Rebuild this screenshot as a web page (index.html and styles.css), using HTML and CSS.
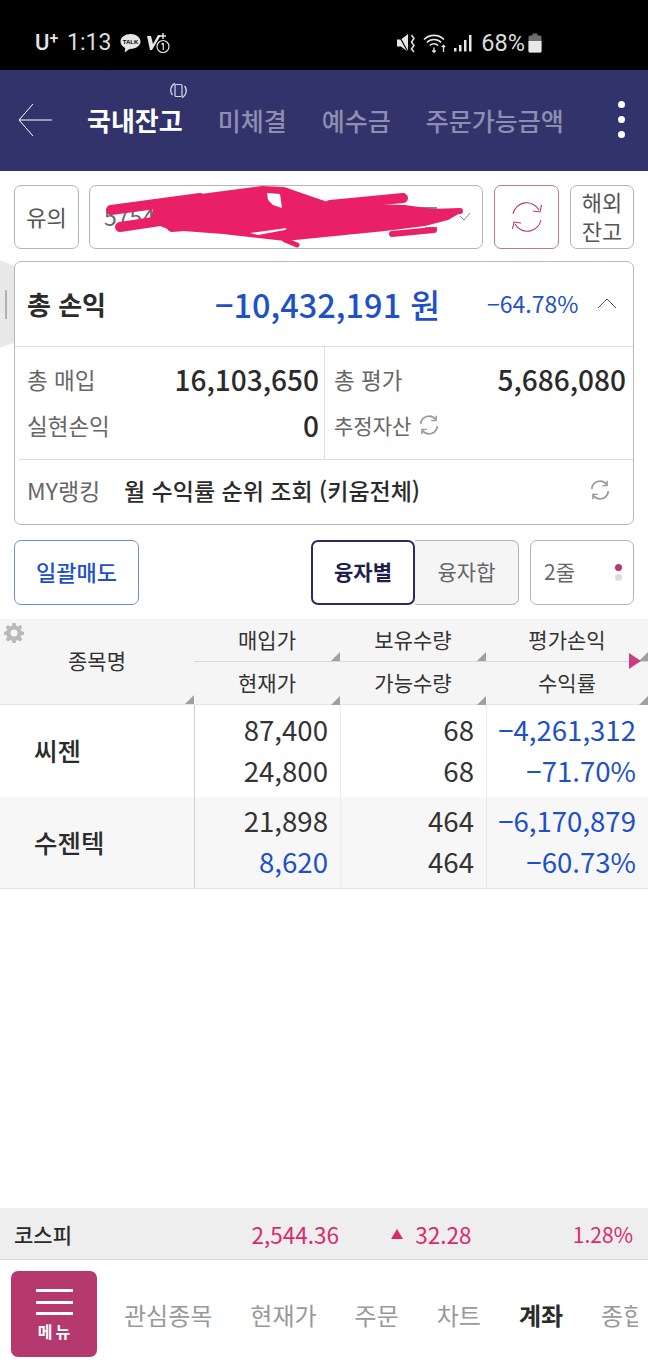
FILE: index.html
```html
<!DOCTYPE html>
<html lang="ko">
<head>
<meta charset="utf-8">
<title>국내잔고</title>
<link rel="stylesheet" href="styles.css">
</head>
<body>
<div class="page">
  <div class="status">
    <div class="status-left">
      <span class="carrier">U<sup>+</sup></span><span class="clock">1:13</span>
      <svg class="talk" width="21" height="20" viewBox="0 0 21 20"><path d="M10.500 1C5 1 .5 4.300.5 8.500c0 2.700 1.900 5.100 4.700 6.400L4.700 19.500l4.800-3.600h1c5.500 0 10-3.300 10-7.400S16 1 10.500 1z" fill="#e6e6e6"/><text x="10.500" y="11" class="talk-t">TALK</text></svg>
      <svg class="vo" width="24" height="21" viewBox="0 0 24 21"><path d="M1 3h4l2 8 5-9h3L6 17H4z" fill="#e6e6e6"/><path d="M17 0v6M14 3h6" stroke="#e6e6e6" stroke-width="1.500"/><circle cx="17" cy="13.500" r="6" fill="#000" stroke="#e6e6e6" stroke-width="1.200"/><path d="M17.300 10v7M15.600 11.500l1.700-1.500" stroke="#e6e6e6" stroke-width="1.200" fill="none"/></svg>
    </div>
    <div class="status-right">
      <svg class="s-mute" width="19" height="20" viewBox="0 0 19 20"><path d="M0 6.500h4l7-5.500v18l-7-5.500H0z" fill="#e6e6e6"/><path d="M14.500 2l2.500 3.500-2.500 3.500 2.500 3.500-2.500 3.500 2.500 3" stroke="#e6e6e6" stroke-width="1.500" fill="none"/><path d="M1 1l10 18" stroke="#000" stroke-width="1.200"/></svg>
      <svg class="s-wifi" width="24" height="20" viewBox="0 0 24 20"><path d="M1 6.500c5.500-5.500 14.500-5.500 20 0M3.800 9.500c4-4 10.400-4 14.400 0M6.800 12.500c2.300-2.300 6-2.300 8.400 0" stroke="#e6e6e6" stroke-width="1.600" fill="none"/><path d="M11 14.500v5M9.300 17.500l1.700 1.800 1.700-1.800M20.500 19v-6.500M18.800 14l1.700-1.700 1.700 1.700" stroke="#e6e6e6" stroke-width="1.300" fill="none"/></svg>
      <svg class="s-sig" width="18" height="18" viewBox="0 0 18 18"><rect x="0" y="14" width="2.500" height="3.500" fill="#e6e6e6"/><rect x="5" y="11" width="2.500" height="6.500" fill="#e6e6e6"/><rect x="10" y="6" width="2.500" height="11.500" fill="#e6e6e6"/><rect x="15" y="1" width="2.500" height="16.500" fill="#e6e6e6"/></svg>
      <span class="battery-text">68%</span>
      <svg class="s-bat" width="14" height="20" viewBox="0 0 14 20"><path d="M4.500 .5h5v2h2.500a1.500 1.500 0 0 1 1.500 1.500v14a1.500 1.500 0 0 1-1.500 1.500H2A1.500 1.500 0 0 1 .5 18V4A1.500 1.500 0 0 1 2 2.500h2.500z" fill="#6e6e6e"/><path d="M.5 8h13v10a1.500 1.500 0 0 1-1.500 1.500H2A1.500 1.500 0 0 1 .5 18z" fill="#e8e8e8"/></svg>
    </div>
  </div>

  <header class="appbar">
    <svg class="back" width="36" height="36" viewBox="0 0 36 36"><path d="M35 18H2M16 2L2 18l14 16" stroke="#fff" stroke-width="1" fill="none"/></svg>
    <nav class="tabs">
      <span class="tab tab-on">국내잔고
        <svg class="rotate" width="19" height="19" viewBox="0 0 19 19"><rect x="6" y="3.500" width="7" height="12" rx="1.200" stroke="#d8d8e8" stroke-width="1.200" fill="none"/><path d="M3.500 14A7.500 7.500 0 0 1 6 2.400M15.500 5A7.500 7.500 0 0 1 13 16.600" stroke="#d8d8e8" stroke-width="1.200" fill="none"/></svg>
      </span>
      <span class="tab">미체결</span>
      <span class="tab">예수금</span>
      <span class="tab">주문가능금액</span>
    </nav>
    <div class="kebab"><i></i><i></i><i></i></div>
  </header>

  <div class="account-row">
    <button class="btn-box notice">유의</button>
    <div class="account-select">
      <span class="acct-no">5754</span>
      <svg class="check" width="12" height="10" viewBox="0 0 12 10"><path d="M1 4l4 4 6-7" stroke="#888" stroke-width="1" fill="none"/></svg>
      <svg class="scribble" width="394" height="64" viewBox="89 185 394 64"><path d="M407 207h30v2h-30zM425 227h12v2h-12z" fill="#888"/><path d="M155 200L262 186l22 1 44 16 77 2 35 5 22 2-14 8-23 6-40 5-100 10-62-7-53-4-20-8z" fill="#ea2066"/><path d="M111 210L200 198M120 227L180 218M172 227L230 222" stroke="#ea2066" stroke-width="10" stroke-linecap="round" fill="none"/><path d="M285 190L332 206M285 240L297 245" stroke="#ea2066" stroke-width="5" stroke-linecap="round" fill="none"/><path d="M330 205L403 198" stroke="#ea2066" stroke-width="10" stroke-linecap="round" fill="none"/><path d="M392 234L434 230M430 212L460 211" stroke="#ea2066" stroke-width="6" stroke-linecap="round" fill="none"/><path d="M267 193l13 1 2 14-9-3-5-5zM250 233l37-5-2 2-27 5z" fill="#fff"/></svg>
    </div>
    <button class="btn-box refresh">
      <svg width="34" height="38" viewBox="0 0 34 38"><path d="M3 16A14 14 0 0 1 29 12M31 22A14 14 0 0 1 5 26" stroke="#b5386e" stroke-width="1.100" fill="none"/><path d="M23 13l7 1 1.500-7M11 25l-7-1-1.500 7" stroke="#b5386e" stroke-width="1.100" fill="none"/></svg>
    </button>
    <button class="btn-box overseas">해외<br>잔고</button>
  </div>

  <section class="card">
    <div class="handle"><i></i></div>
    <div class="total">
      <span class="total-label">총 손익</span>
      <span class="total-val">−10,432,191 원</span>
      <span class="total-pct">−64.78%</span>
      <svg class="caret" width="20" height="11" viewBox="0 0 20 11"><path d="M1 10l9-9 9 9" stroke="#555" stroke-width="1" fill="none"/></svg>
    </div>
    <div class="summary">
      <div class="cell cell-l">
        <div class="line"><span class="lbl">총 매입</span><span class="num">16,103,650</span></div>
        <div class="line"><span class="lbl">실현손익</span><span class="num">0</span></div>
      </div>
      <div class="cell cell-r">
        <div class="line"><span class="lbl">총 평가</span><span class="num">5,686,080</span></div>
        <div class="line"><span class="lbl lbl-icon">추정자산
          <svg width="22" height="22" viewBox="0 0 20 20"><path d="M2.500 9A7.500 7.500 0 0 1 16 5M17.500 11A7.500 7.500 0 0 1 4 15" stroke="#999" stroke-width="1.600" fill="none"/><path d="M16.500 1.500V6h-4.500M3.500 18.500V14H8" stroke="#999" stroke-width="1.300" fill="none"/></svg></span></div>
      </div>
    </div>
    <div class="ranking">
      <span class="rank-label">MY랭킹</span>
      <span class="rank-text">월 수익률 순위 조회 (키움전체)</span>
      <svg width="22" height="22" viewBox="0 0 20 20"><path d="M2.500 9A7.500 7.500 0 0 1 16 5M17.500 11A7.500 7.500 0 0 1 4 15" stroke="#999" stroke-width="1.600" fill="none"/><path d="M16.500 1.500V6h-4.500M3.500 18.500V14H8" stroke="#999" stroke-width="1.300" fill="none"/></svg>
    </div>
  </section>

  <div class="actions">
    <button class="sell">일괄매도</button>
    <div class="segment">
      <button class="seg seg-on">융자별</button>
      <button class="seg">융자합</button>
    </div>
    <div class="lines"><span>2줄</span><span class="dots"><i class="dot-on"></i><i></i></span></div>
  </div>

  <div class="table">
    <div class="thead">
      <div class="th th-name"><svg class="gear" width="20" height="20" viewBox="0 0 20 20"><path d="M8.500 0h3l.5 2.800 1.800.8L16.200 2l2.100 2.100-1.600 2.400.8 1.800 2.500.5v3l-2.500.5-.8 1.800 1.600 2.400-2.100 2.100-2.400-1.600-1.800.8-.5 2.200h-3L8 17.800l-1.800-.8-2.400 1.600-2.100-2.100 1.600-2.400-.8-1.800L0 11.700v-3l2.500-.5.8-1.800L1.700 4 3.800 2l2.400 1.600L8 2.800z" fill="#b9b9b9"/><circle cx="10" cy="10" r="3.500" fill="#f5f5f5"/></svg>종목명<i class="tri"></i></div>
      <div class="th-col">
        <div class="th th-top">매입가<i class="tri"></i></div>
        <div class="th th-bot">현재가<i class="tri"></i></div>
      </div>
      <div class="th-col">
        <div class="th th-top">보유수량<i class="tri"></i></div>
        <div class="th th-bot">가능수량<i class="tri"></i></div>
      </div>
      <div class="th-col">
        <div class="th th-top">평가손익<i class="tri"></i><b class="more"></b></div>
        <div class="th th-bot">수익률<i class="tri"></i></div>
      </div>
    </div>
    <div class="tr">
      <div class="td-name">씨젠</div>
      <div class="td td-first"><span>87,400</span><span>24,800</span></div>
      <div class="td"><span>68</span><span>68</span></div>
      <div class="td blue"><span>−4,261,312</span><span>−71.70%</span></div>
    </div>
    <div class="tr tr-alt">
      <div class="td-name">수젠텍</div>
      <div class="td td-first"><span>21,898</span><span class="blue">8,620</span></div>
      <div class="td"><span>464</span><span>464</span></div>
      <div class="td blue"><span>−6,170,879</span><span>−60.73%</span></div>
    </div>
  </div>

  <div class="spacer"></div>

  <div class="ticker">
    <span class="tk-name">코스피</span>
    <span class="tk-val">2,544.36</span>
    <span class="tk-chg"><i class="up"></i>32.28</span>
    <span class="tk-pct">1.28%</span>
  </div>

  <footer class="bottom">
    <button class="menu"><span class="bars"><i></i><i></i><i></i></span><span class="menu-t">메뉴</span></button>
    <nav class="bottom-tabs">
      <span>관심종목</span><span>현재가</span><span>주문</span><span>차트</span><span class="b-on">계좌</span><span>종합</span>
    </nav>
  </footer>
</div>
</body>
</html>
```
FILE: styles.css
```css
* { box-sizing: border-box; }
html, body { margin: 0; padding: 0; background: #fff; }
body { font-family: "Noto Sans CJK KR", "Noto Sans", sans-serif; color: #333; }
button { font-family: inherit; padding: 0; background: #fff; }
i { display: block; font-style: normal; }
.page { width: 648px; height: 1368px; display: flex; flex-direction: column; overflow: hidden; position: relative; }

.status { height: 70px; flex: none; background: #000; color: #e6e6e6; display: flex; justify-content: space-between; padding: 30px 106px 0 35px; }
.status-left, .status-right { display: flex; align-items: center; height: 26px; }
.carrier { font: 500 22px/26px "Roboto", sans-serif; width: 32px; white-space: nowrap; }
.carrier sup { font-size: 16px; line-height: 0; vertical-align: 6px; }
.clock { font: 400 23px/26px "Roboto", sans-serif; color: #dcdcdc; margin-right: 9px; }
.talk { margin-right: 5px; }
.talk-t { font: 700 6px "Liberation Sans", sans-serif; text-anchor: middle; fill: #000; }
.s-mute { margin-left: -2px; }
.s-wifi { margin-left: 7px; }
.s-sig { margin-left: 7px; }
.battery-text { font: 400 23.500px/26px "Roboto", sans-serif; color: #dcdcdc; margin: 0 3px 0 9px; }

.appbar { height: 101px; flex: none; background: #32336b; display: flex; align-items: center; padding: 0 0 2px 17px; }
.back { flex: none; }
.tabs { display: flex; gap: 35px; margin-left: 34px; font-size: 25px; line-height: 36px; font-weight: 500; color: #8c8fb0; white-space: nowrap; }
.tab { position: relative; }
.tab-on { color: #fff; font-weight: 700; font-size: 26px; }
.rotate { position: absolute; left: 82px; top: -21px; }
.kebab { margin-left: auto; margin-right: 23px; display: flex; flex-direction: column; gap: 8px; }
.kebab i { width: 7px; height: 7px; border-radius: 50%; background: #fff; }

.account-row { display: flex; gap: 10px; padding: 14px 14px 0; height: 90px; flex: none; }
.btn-box { border: 1.500px solid #b4b4b4; border-radius: 7px; height: 64px; color: #555; font-size: 22px; line-height: 28px; font-weight: 400; padding-bottom: 3px; }
.notice { width: 65px; }
.account-select { position: relative; flex: 1; height: 64px; margin-right: 1px; border: 1.500px solid #b4b4b4; border-radius: 7px; display: flex; align-items: center; padding: 0 0 2px 14px; font-size: 23px; color: #666; }
.check { position: absolute; right: 11px; top: 26px; }
.scribble { position: absolute; left: -1.500px; top: -1.500px; overflow: visible; }
.refresh { width: 65px; margin-right: 1px; border-color: #b5789a; display: flex; align-items: center; justify-content: center; padding-bottom: 0; }
.overseas { width: 64px; line-height: 29px; }

.card { position: relative; height: 264px; flex: none; margin: 0 14px; border: 1.500px solid #b8b8b8; border-radius: 7px; background: #fff; }
.handle { position: absolute; left: -16px; top: -2px; width: 15px; height: 88px; background: #e8e8e8; clip-path: polygon(0 0, 100% 6%, 100% 94%, 0 100%); display: flex; align-items: center; padding-left: 6px; }
.handle i { width: 2px; height: 29px; background: #b0b0b0; }
.total { height: 85px; border-bottom: 1px solid #dedede; display: flex; align-items: center; padding: 0 0 2px 12px; }
.total-label { font-size: 26px; font-weight: 700; width: 188px; color: #2b2b2b; white-space: nowrap; }
.total-val { font-size: 32.500px; font-weight: 500; color: #1e50c8; width: 272px; white-space: nowrap; }
.total-pct { font-size: 23px; color: #1e50c8; width: 110px; white-space: nowrap; }
.summary { display: grid; grid-template-columns: 310px 1fr; height: 112px; }
.cell { padding: 9px 5px 0 12px; }
.cell-l { border-right: 1px solid #dedede; }
.cell-r { padding-left: 9px; padding-right: 7px; }
.line { display: flex; justify-content: space-between; align-items: center; height: 46px; }
.lbl { font-size: 22.500px; color: #666; white-space: nowrap; }
.lbl-icon { display: flex; align-items: center; gap: 7px; font-size: 21px; }
.num { font-size: 28px; font-weight: 500; color: #2b2b2b; }
.ranking { display: flex; align-items: center; height: 65px; margin-left: 4px; border-top: 1px solid #dedede; padding: 0 22px 4px 8px; }
.rank-label { font-size: 23px; color: #666; width: 97px; white-space: nowrap; }
.rank-text { font-size: 23px; font-weight: 500; color: #2b2b2b; flex: 1; white-space: nowrap; }

.actions { display: flex; align-items: center; height: 94px; flex: none; padding: 0 14px 0; }
.sell { width: 125px; height: 65px; border: 1.500px solid #6f90c8; border-radius: 7px; color: #1e50c8; font-size: 22px; font-weight: 500; padding-bottom: 3px; }
.segment { display: flex; margin-left: 172px; height: 65px; }
.seg { width: 104px; border: 1.500px solid #b4b4b4; border-left: 0; border-radius: 0 7px 7px 0; background: #f5f5f5; font-size: 21px; color: #666; padding-bottom: 3px; }
.seg-on { border: 2px solid #2b2b5e; border-radius: 7px; background: #fff; color: #1f1f4f; font-weight: 700; }
.lines { width: 104px; height: 65px; margin-left: 11px; border: 1.500px solid #b4b4b4; border-radius: 7px; display: flex; justify-content: space-between; align-items: center; padding: 0 11px 3px 13px; font-size: 21px; color: #666; }
.dots { display: flex; flex-direction: column; gap: 3px; padding-top: 3px; }
.dots i { width: 7px; height: 7px; border-radius: 50%; background: #dcdcdc; }
.dots .dot-on { background: #b5386e; }

.table { flex: none; }
.thead { display: grid; grid-template-columns: 194px 146px 146px 162px; height: 86px; background: #f5f5f5; border-bottom: 1px solid #e4e4e4; position: relative; }
.th { position: relative; display: flex; align-items: center; justify-content: center; font-size: 21px; color: #333; height: 43px; padding-bottom: 3px; }
.th-name { height: 85px; }
.th-top { border-bottom: 1px solid #d8d8d8; }
.tri { position: absolute; right: 0; bottom: 0; width: 0; height: 0; border-style: solid; border-width: 0 0 9px 9px; border-color: transparent transparent #a0a0a0 transparent; }
.gear { position: absolute; left: 4px; top: 4px; }
.more { position: absolute; right: 7px; bottom: -8px; width: 0; height: 0; border-style: solid; border-width: 8px 0 8px 12px; border-color: transparent transparent transparent #cb3f80; z-index: 1; }
.tr { display: grid; grid-template-columns: 194px 146px 146px 162px; height: 92px; }
.tr-alt { background: #f7f7f7; height: 92px; border-bottom: 1px solid #e4e4e4; }
.td-name { display: flex; align-items: center; padding: 0 0 3px 34px; font-size: 25.500px; font-weight: 500; color: #2b2b2b; }
.td { border-left: 1px solid #ececec; display: flex; flex-direction: column; justify-content: center; align-items: flex-end; padding: 0 12px 4px 0; gap: 5px; font-size: 27.600px; line-height: 36px; color: #333; white-space: nowrap; }
.td-first { border-left-color: #cfcfcf; }
.blue, .td .blue { color: #1e50c8; }

.spacer { flex: 1; }

.ticker { height: 52px; flex: none; background: #eeeeef; border-bottom: 1px solid #d8d8d8; display: flex; align-items: center; padding: 0 15px 0 14px; font-size: 22.500px; color: #da2a6e; }
.tk-name { color: #2b2b2b; width: 238px; font-weight: 500; font-size: 21px; }
.tk-val { width: 137px; }
.tk-chg { display: flex; align-items: center; gap: 12px; width: 185px; padding-left: 3px; }
.up { width: 0; height: 0; border-style: solid; border-width: 0 6px 10px 6px; border-color: transparent transparent #da2a6e transparent; }
.tk-pct { margin-left: auto; font-size: 21px; }

.bottom { height: 108px; flex: none; display: flex; padding: 11px 0 0 11px; overflow: hidden; }
.menu { width: 86px; height: 86px; flex: none; background: #b5386e; border: 0; border-radius: 7px; color: #fff; display: flex; flex-direction: column; align-items: center; padding-top: 18px; }
.bars { display: flex; flex-direction: column; gap: 8.500px; }
.bars i { width: 37px; height: 3px; background: #fff; }
.menu-t { font-size: 16px; line-height: 20px; font-weight: 700; letter-spacing: 3px; margin: 6px 0 0 3px; }
.bottom-tabs { display: flex; gap: 38px; margin-left: 27px; height: 86px; align-items: center; font-size: 24px; color: #999; white-space: nowrap; width: 514px; overflow: hidden; }
.b-on { color: #2b2b2b; font-weight: 700; }
```
